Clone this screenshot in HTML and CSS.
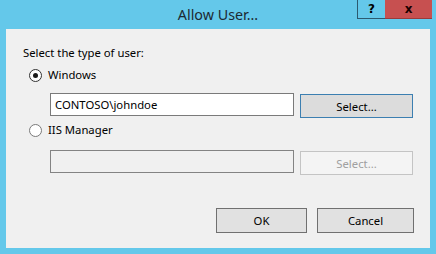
FILE: index.html
```html
<!DOCTYPE html>
<html>
<head>
<meta charset="utf-8">
<link rel="stylesheet" href="styles.css">
</head>
<body>
<div class="window">
  <div class="titlebar">
    <div class="tb-side"></div>
    <div class="title">Allow User...</div>
    <div class="tb-side tb-right">
      <span class="cap-btn help">?</span>
      <span class="cap-btn close">x</span>
    </div>
  </div>
  <div class="client">
    <div class="heading">Select the type of user:</div>
    <div class="option option-first">
      <span class="radio checked"></span>
      <span class="label">Windows</span>
    </div>
    <div class="field-row">
      <div class="textbox">CONTOSO\johndoe</div>
      <div class="btn btn-select default">Select...</div>
    </div>
    <div class="option option-second">
      <span class="radio"></span>
      <span class="label">IIS Manager</span>
    </div>
    <div class="field-row field-row-second">
      <div class="textbox disabled"></div>
      <div class="btn btn-select disabled">Select...</div>
    </div>
    <div class="footer">
      <div class="btn btn-ok">OK</div>
      <div class="btn btn-cancel">Cancel</div>
    </div>
  </div>
</div>
</body>
</html>
```

FILE: styles.css
```css
html, body {
  margin: 0;
  padding: 0;
}
body {
  width: 436px;
  height: 254px;
  background: #64c8ea;
  font-family: "Noto Sans", "Open Sans", sans-serif;
  font-size: 11.3px;
  color: #000;
  overflow: hidden;
}
.window {
  display: flex;
  flex-direction: column;
  height: 254px;
  padding: 0 6px 6px 6px;
  box-sizing: border-box;
}
.titlebar {
  display: grid;
  grid-template-columns: 1fr auto 1fr;
  height: 29px;
  margin: 0 -6px;
}
.title {
  font-size: 14.3px;
  line-height: 29px;
  color: #1c2a33;
  padding-bottom: 2px;
}
.tb-right {
  display: flex;
  justify-content: flex-end;
  align-items: flex-start;
  padding-right: 4px;
}
.cap-btn {
  display: flex;
  align-items: center;
  justify-content: center;
  height: 19px;
  box-sizing: border-box;
  font-family: "DejaVu Sans", sans-serif;
  font-weight: bold;
  font-size: 12px;
  color: #000;
}
.help {
  width: 28px;
  border: 1px solid #2c5a70;
  border-top: none;
  border-right: none;
  background: #64c8ea;
}
.close {
  width: 47px;
  background: #c75050;
  border-bottom: 1px solid #9a3b3b;
  color: #1a0000;
}
.client {
  flex: 1;
  background: #f0f0f0;
  padding: 16px 16px 0 17px;
  display: flex;
  flex-direction: column;
}
.heading {
  line-height: 16px;
  height: 16px;
}
.option {
  display: flex;
  align-items: center;
  height: 16px;
  line-height: 16px;
  padding-left: 6px;
}
.option-first {
  margin-top: 6px;
}
.option-second {
  margin-top: 4px;
}
.radio {
  width: 13px;
  height: 13px;
  box-sizing: border-box;
  border: 1px solid #333;
  border-radius: 50%;
  background: #fff;
  display: flex;
  align-items: center;
  justify-content: center;
  margin-right: 6px;
}
.radio.checked::after {
  content: "";
  width: 5px;
  height: 5px;
  border-radius: 50%;
  background: #1a1a1a;
}
.radio:not(.checked) {
  border-color: #7a7a7a;
}
.label {
  color: #000;
}
.field-row {
  display: flex;
  align-items: flex-start;
  margin-top: 10px;
  padding-left: 27px;
  gap: 6px;
}
.field-row-second {
  margin-top: 12px;
}
.textbox {
  width: 244px;
  height: 23px;
  box-sizing: border-box;
  border: 1px solid #7a7a7a;
  background: #fff;
  padding-left: 4px;
  line-height: 21px;
}
.textbox.disabled {
  background: #f0f0f0;
  border-color: #838383;
}
.btn {
  box-sizing: border-box;
  height: 24px;
  border: 1px solid #707070;
  background: #e1e1e1;
  display: flex;
  align-items: center;
  justify-content: center;
}
.btn-select {
  width: 113px;
  margin-top: 1px;
}
.btn.default {
  border-color: #3c7fb1;
  background: #dcdcdc;
}
.btn.disabled {
  border-color: #c4c4c4;
  background: #f4f4f4;
  color: #a0a0a0;
}
.footer {
  display: flex;
  justify-content: flex-end;
  gap: 10px;
  margin-top: 33px;
}
.btn-ok {
  width: 91px;
  height: 25px;
}
.btn-cancel {
  width: 97px;
  height: 25px;
}
```
